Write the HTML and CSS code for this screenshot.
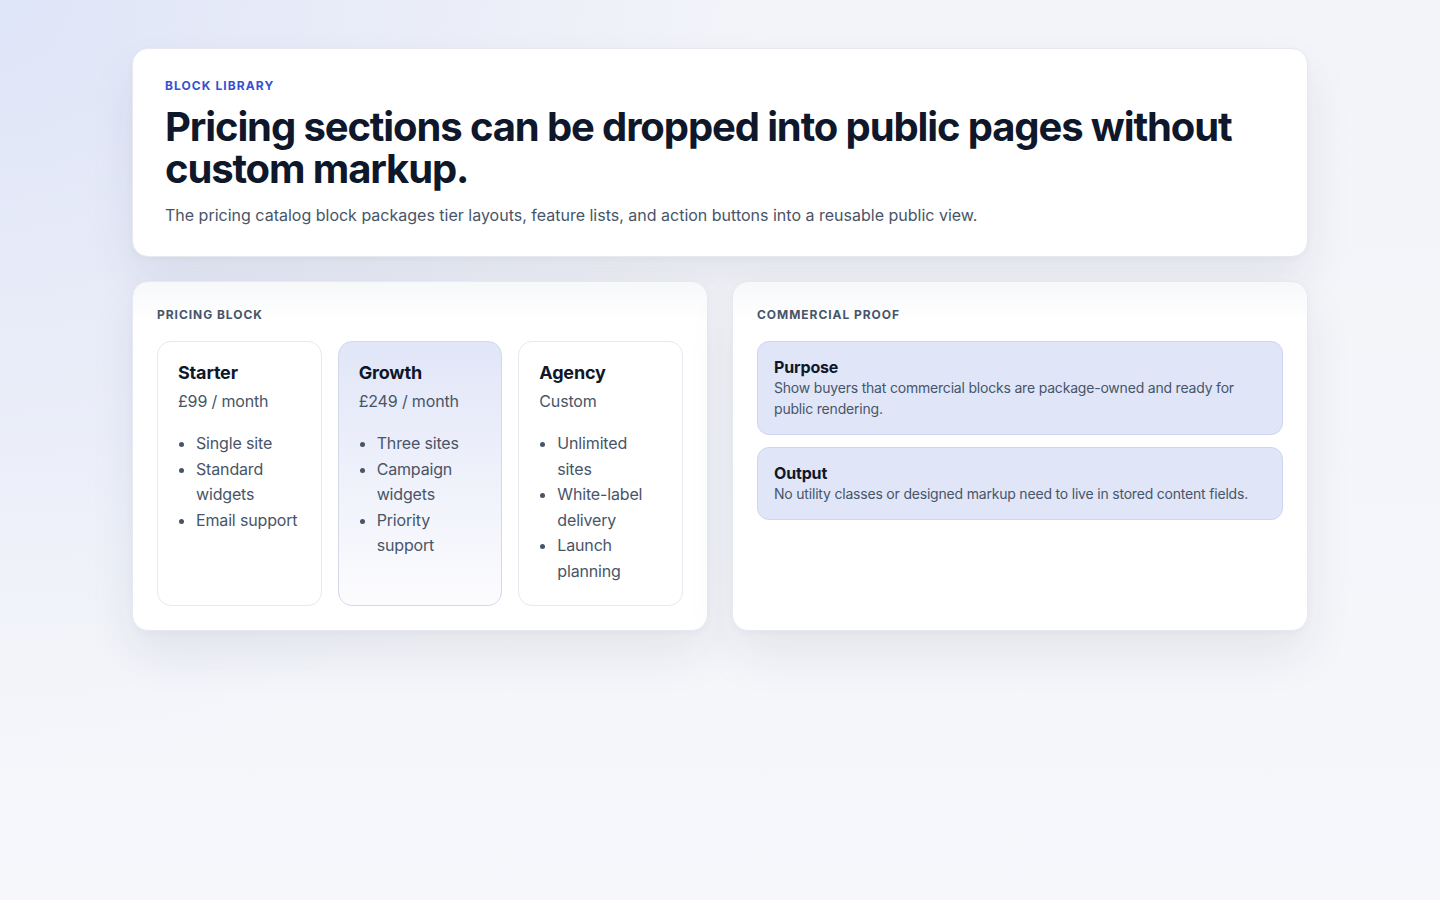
FILE: index.html
```html
<!DOCTYPE html>
<html lang="en">
<head>
<meta charset="utf-8">
<title>Block Library – Pricing</title>
<link rel="stylesheet" href="styles.css">
</head>
<body>
<main class="page">
  <section class="hero card">
    <p class="eyebrow">Block library</p>
    <h1 class="hero-title">Pricing sections can be dropped into public pages without custom markup.</h1>
    <p class="hero-text">The pricing catalog block packages tier layouts, feature lists, and action buttons into a reusable public view.</p>
  </section>

  <div class="grid">
    <section class="card panel">
      <h2 class="label">Pricing block</h2>
      <div class="tiers">
        <article class="tier">
          <h3 class="tier-name">Starter</h3>
          <p class="tier-price">£99 / month</p>
          <ul class="features">
            <li>Single site</li>
            <li>Standard widgets</li>
            <li>Email support</li>
          </ul>
        </article>
        <article class="tier tier-featured">
          <h3 class="tier-name">Growth</h3>
          <p class="tier-price">£249 / month</p>
          <ul class="features">
            <li>Three sites</li>
            <li>Campaign widgets</li>
            <li>Priority support</li>
          </ul>
        </article>
        <article class="tier">
          <h3 class="tier-name">Agency</h3>
          <p class="tier-price">Custom</p>
          <ul class="features">
            <li>Unlimited sites</li>
            <li>White-label delivery</li>
            <li>Launch planning</li>
          </ul>
        </article>
      </div>
    </section>

    <section class="card panel">
      <h2 class="label">Commercial proof</h2>
      <div class="proofs">
        <div class="proof">
          <h3 class="proof-title">Purpose</h3>
          <p class="proof-text">Show buyers that commercial blocks are package-owned and ready for public rendering.</p>
        </div>
        <div class="proof">
          <h3 class="proof-title">Output</h3>
          <p class="proof-text">No utility classes or designed markup need to live in stored content fields.</p>
        </div>
      </div>
    </section>
  </div>
</main>
</body>
</html>
```

FILE: styles.css
```css
* { box-sizing: border-box; }

html, body { height: 100%; }

body {
  margin: 0;
  font-family: Inter, "Noto Sans", "Liberation Sans", sans-serif;
  color: #0f172a;
  background:
    radial-gradient(circle at 0% 0%, #dfe5f8 0%, rgba(223,229,248,0) 45%),
    linear-gradient(180deg, #f3f4f9 0%, #f6f7fb 100%);
  min-height: 900px;
}

.page {
  width: 1176px;
  margin: 0 auto;
  padding: 48px 0;
  display: flex;
  flex-direction: column;
  gap: 24px;
}

.card {
  background: linear-gradient(180deg, #f7f8fa 0%, #ffffff 40px);
  border: 1px solid #e6e9ef;
  border-radius: 16px;
  box-shadow: 0 24px 48px rgba(30, 41, 80, 0.08), 0 2px 6px rgba(30, 41, 80, 0.03);
}

.hero {
  background: #ffffff;
  padding: 29px 32px 28px;
}

.eyebrow {
  margin: 0 0 12px;
  font-size: 12px;
  font-weight: 700;
  letter-spacing: 0.09em;
  text-transform: uppercase;
  color: #3553d1;
  line-height: 16px;
}

.hero-title {
  margin: 0 0 12px;
  font-size: 40px;
  line-height: 42px;
  font-weight: 700;
  letter-spacing: -0.028em;
  color: #0f172a;
}

.hero-text {
  margin: 0;
  font-size: 16px;
  line-height: 26px;
  color: #475569;
}

.grid {
  display: grid;
  grid-template-columns: 1fr 1fr;
  gap: 24px;
}

.panel {
  padding: 24px;
}

.label {
  margin: 0 0 18px;
  font-size: 12px;
  line-height: 17px;
  font-weight: 700;
  letter-spacing: 0.08em;
  text-transform: uppercase;
  color: #475569;
}

.tiers {
  display: grid;
  grid-template-columns: repeat(3, 1fr);
  gap: 16px;
}

.tier {
  border: 1px solid #e6e9ef;
  border-radius: 14px;
  background: #ffffff;
  padding: 18px 20px 20px;
}

.tier-featured {
  background: linear-gradient(180deg, #e1e6f8 0%, #f0f2fb 55%, #fcfcfe 100%);
  border-color: #d3d9ea;
}

.tier-name {
  margin: 0;
  font-size: 18px;
  line-height: 26px;
  font-weight: 700;
  letter-spacing: -0.01em;
  color: #0f172a;
}

.tier-price {
  margin: 2px 0 0;
  font-size: 16px;
  line-height: 26px;
  letter-spacing: -0.01em;
  color: #475569;
}

.features {
  margin: 17px 0 0;
  padding-left: 18px;
  font-size: 16px;
  line-height: 25.6px;
  letter-spacing: -0.01em;
  color: #475569;
}

.proofs {
  display: flex;
  flex-direction: column;
  gap: 12px;
}

.proof {
  background: #e0e6f8;
  border: 1px solid #cdd5f0;
  border-radius: 12px;
  padding: 15px 16px 15px;
}

.proof-title {
  margin: 0;
  font-size: 16px;
  line-height: 20px;
  font-weight: 700;
  letter-spacing: -0.01em;
  color: #0f172a;
}

.proof-text {
  margin: 0;
  font-size: 14px;
  line-height: 21px;
  letter-spacing: -0.014em;
  color: #475569;
}
```
